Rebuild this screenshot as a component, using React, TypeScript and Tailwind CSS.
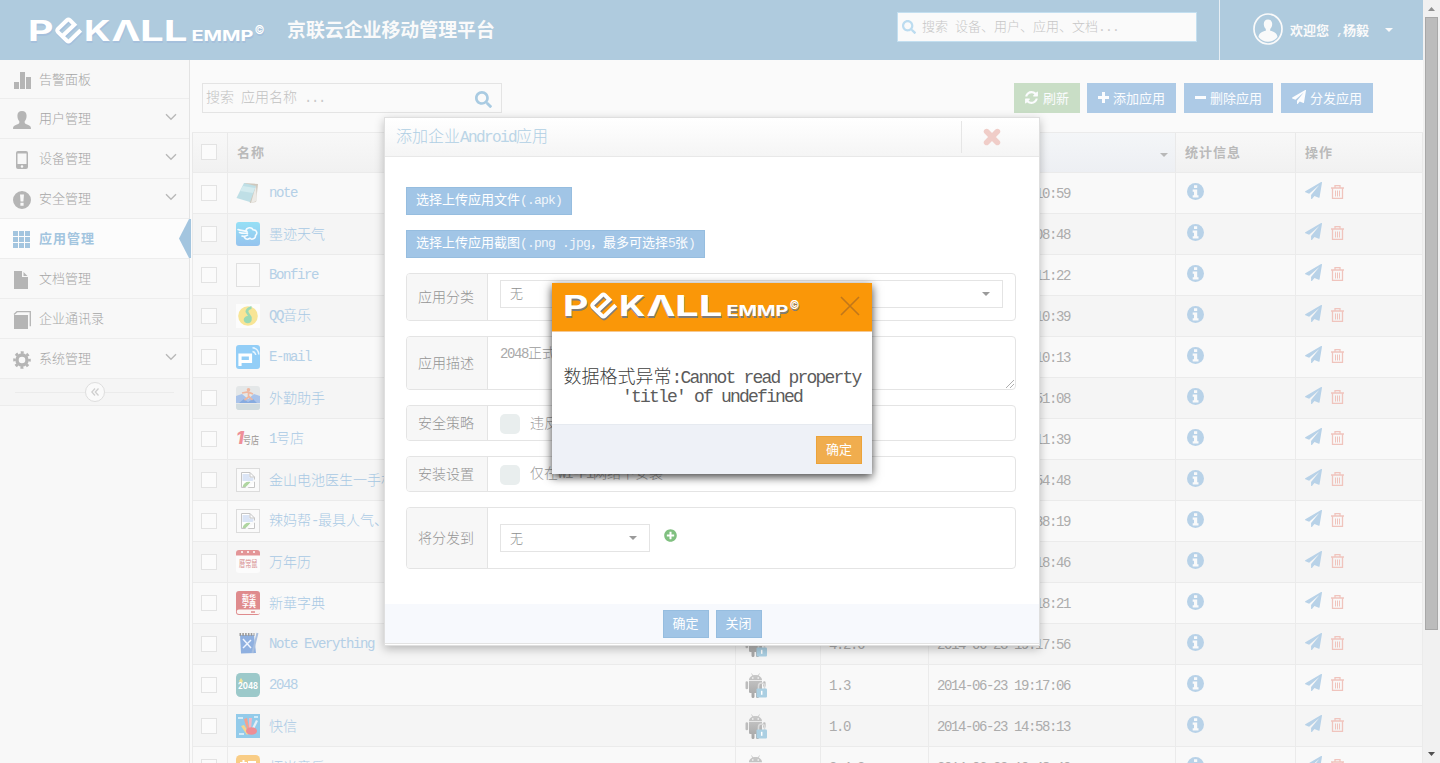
import React from "react";
import { FaSearch, FaPlusCircle } from "react-icons/fa";

/* Splits a string into Han and Latin runs so that Latin letters take half an em. */
function T({ children, size = 13 }: { children: string; size?: number }) {
  const track: Record<number, string> = {
    13: "tracking-[-0.8px]",
    14: "tracking-[-1.4px]",
    16: "tracking-[-1.6px]",
    18: "tracking-[-1.8px]",
  };
  const parts = children.match(/[\x20-\x7e]+|[^\x20-\x7e]+/g) || [];
  return (
    <span className="whitespace-pre">
      {parts.map((p, i) =>
        /^[\x20-\x7e]/.test(p) ? (
          <span key={i} className={`font-['Liberation_Mono',monospace] opacity-85 ${track[size]}`}>
            {p}
          </span>
        ) : (
          <span key={i}>{p}</span>
        )
      )}
    </span>
  );
}

function LogoShapes({ color }: { color: string }) {
  const f = "Inter, 'Liberation Sans', sans-serif";
  return (
    <g fill={color} fontFamily={f} fontWeight={700}>
      <text x="-1" y="25" fontSize="29" textLength="25.5" lengthAdjust="spacingAndGlyphs">P</text>
      <path
        d="M8.300 19.200 L20 8.300 L15.500 3.700 Q14 2.300 12.500 3.700 L3.600 12.400 Q2.200 14 3.600 15.600 L12.500 24.300 Q14 25.700 15.500 24.300 L26.300 13.800"
        transform="translate(25.400 .5)"
        fill="none"
        stroke={color}
        strokeWidth="4"
      />
      <text x="55" y="25" fontSize="29" textLength="26.500" lengthAdjust="spacingAndGlyphs">K</text>
      <text x="82.500" y="25" fontSize="29" textLength="29" lengthAdjust="spacingAndGlyphs">Λ</text>
      <text x="111" y="25" fontSize="29" textLength="47.500" lengthAdjust="spacingAndGlyphs">LL</text>
      <text x="162.500" y="25" fontSize="14.500" textLength="62" lengthAdjust="spacingAndGlyphs">EMMP</text>
      <text x="225.500" y="18" fontSize="12" fontWeight={500} textLength="10" lengthAdjust="spacingAndGlyphs">©</text>
    </g>
  );
}

function Logo({ shadow }: { shadow: string }) {
  return (
    <svg width="237" height="30" viewBox="0 0 237 30" className="shrink-0 overflow-visible">
      <g transform="translate(.6 1.800)" aria-hidden="true">
        <LogoShapes color={shadow} />
      </g>
      <LogoShapes color="#ffffff" />
    </svg>
  );
}

function Plane({ className }: { className: string }) {
  return (
    <svg viewBox="0 0 1792 1792" fill="currentColor" className={className}>
      <path d="M1764 11q33 24 27 64l-256 1536q-5 29-32 45-14 8-31 8-11 0-24-5l-453-185-242 295q-18 23-49 23-13 0-22-4-19-7-30.500-23.500T640 1728v-349l864-1059-1069 925-395-162q-37-14-40-55-2-40 32-59L1696 9q15-9 32-9 20 0 36 11z" />
    </svg>
  );
}

function Info() {
  return (
    <svg width="17" height="17" viewBox="0 0 17 17" fill="#b8d2e8">
      <circle cx="8.500" cy="8.500" r="8.500" />
      <path d="M7 2.300h3.200v2.700H7zM5.700 6.500h4.500v5.700h1.300v2.300H5.700v-2.300H7V8.700H5.700z" fill="#fafafa" />
    </svg>
  );
}

const NAV: { label: string; icon: string; more?: boolean; active?: boolean }[] = [
  { label: "告警面板", icon: "bars" },
  { label: "用户管理", icon: "user", more: true },
  { label: "设备管理", icon: "phone", more: true },
  { label: "安全管理", icon: "alert", more: true },
  { label: "应用管理", icon: "grid", active: true },
  { label: "文档管理", icon: "file" },
  { label: "企业通讯录", icon: "book" },
  { label: "系统管理", icon: "gear", more: true },
];

function NavIcon({ name }: { name: string }) {
  return (
    <svg width="18" height="18" viewBox="0 0 18 18" fill="#b5b5b5">
      {name === "bars" && <path d="M1 11h5v7H1zM7 1h5v17H7zM13 6h5v12h-5z" />}
      {name === "user" && (
        <path d="M9 0c3 0 4.600 2 4.600 4.800 0 2.400-.8 4.200-1.900 5.400v1.600c0 .8 1 1.200 3 2 2.400.9 3.300 1.600 3.300 4.200H0c0-2.600.9-3.300 3.300-4.200 2-.8 3-1.200 3-2v-1.600C5.200 9 4.400 7.200 4.400 4.800 4.400 2 6 0 9 0z" />
      )}
      {name === "phone" && (
        <path fillRule="evenodd" d="M5 0h8q2 0 2 2v14q0 2-2 2H5q-2 0-2-2V2q0-2 2-2zM4.500 2.500v10.500h9V2.500zM9 14.200a1.300 1.300 0 1 0 0 2.600 1.300 1.300 0 0 0 0-2.600z" />
      )}
      {name === "alert" && (
        <path fillRule="evenodd" d="M9 0a9 9 0 1 1 0 18A9 9 0 0 1 9 0zM7 3.600l.6 6.800h2.800l.6-6.800zM7.400 11.800v2.900h3.200v-2.900z" />
      )}
      {name === "grid" && (
        <path fill="#a3c5df" d="M0 0h5v5H0zM6 0h5v5H6zM12 0h5v5h-5zM0 6h5v5H0zM6 6h5v5H6zM12 6h5v5h-5zM0 12h5v5H0zM6 12h5v5H6zM12 12h5v5h-5z" />
      )}
      {name === "file" && <path d="M1 0h8v6h6v12H1zM10.500 1l4 4h-4z" />}
      {name === "book" && (
        <>
          <path d="M1 4h14v14H1z" />
          <path d="M1 3.500 4 .7h13.300v14.600" fill="none" stroke="#b5b5b5" strokeWidth="1.300" />
        </>
      )}
      {name === "gear" && (
        <g fill="none" stroke="#b5b5b5">
          <circle cx="9" cy="9" r="5" strokeWidth="3.400" />
          <circle cx="9" cy="9" r="7.500" strokeWidth="2.600" strokeDasharray="2.945 2.945" strokeDashoffset="1.470" />
        </g>
      )}
    </svg>
  );
}

const ROWS: [string, string, string][] = [
  ["note", "1.0", "2014-06-25 10:10:59"],
  ["墨迹天气", "2.1", "2014-06-25 10:08:48"],
  ["Bonfire", "1.0", "2014-06-24 19:11:22"],
  ["QQ音乐", "3.9", "2014-06-24 18:10:39"],
  ["E-mail", "1.2", "2014-06-24 17:10:13"],
  ["外勤助手", "2.0", "2014-06-24 15:51:08"],
  ["1号店", "3.1", "2014-06-24 14:11:39"],
  ["金山电池医生一手机省电", "4.3", "2014-06-24 11:54:48"],
  ["辣妈帮-最具人气、最温暖", "4.0", "2014-06-24 10:38:19"],
  ["万年历", "3.2", "2014-06-24 09:18:46"],
  ["新華字典", "1.1", "2014-06-23 20:18:21"],
  ["Note Everything", "4.2.6", "2014-06-23 19:17:56"],
  ["2048", "1.3", "2014-06-23 19:17:06"],
  ["快信", "1.0", "2014-06-23 14:58:13"],
  ["虾米音乐", "2.4.3", "2014-06-23 10:48:40"],
];

function AppIcon({ n }: { n: number }) {
  const cjk = "'Noto Sans CJK SC', sans-serif";
  return (
    <svg width="24" height="24" viewBox="0 0 24 24" className="shrink-0">
      {n === 0 && (
        <>
          <path d="M8 2l14 1-2 18-6 1z" fill="#cfc8bd" />
          <path d="M20 4l1 16-6 2z" fill="#eceae6" />
          <path d="M8 2l12 3-6 16L.5 17z" fill="#bfdfe6" />
          <path d="M7 5l12 2-2 5L4 10z" fill="#d3ebef" />
        </>
      )}
      {n === 1 && (
        <>
          <defs>
            <linearGradient id="sky" x1="0" y1="0" x2="0" y2="1">
              <stop offset="0" stopColor="#95e0f6" />
              <stop offset="1" stopColor="#95c3ee" />
            </linearGradient>
          </defs>
          <rect width="24" height="24" rx="3" fill="url(#sky)" />
          <path d="M2 7.500c3 1.200 6 1 9 2M3.500 10.500c3 1.200 5 1 8 .6M6 14c2 .8 3.500.5 5.500-.8M10 8.500c.5-3 5.500-4 7-.8 4 0 4.800 4 2.500 5.800.3 3.500-4 4.500-5.500 2.800-2.500 1.500-4.500.8-5.500-.8" fill="none" stroke="#f4fbff" strokeWidth="1.600" strokeLinecap="round" />
        </>
      )}
      {n === 2 && <rect x=".5" y=".5" width="23" height="23" fill="#fafafa" stroke="#e0e0e0" />}
      {n === 3 && (
        <>
          <rect width="24" height="24" fill="#fcfcfc" />
          <circle cx="12" cy="12" r="9.800" fill="#f8e596" />
          <path d="M9.500 8c0-3 2.500-5 6-6v3c-2.500.8-3.500 1.500-3 3l3.200 5v2.500a4 3.600 0 1 1-3.700-3.400z" fill="#9ad9b5" />
        </>
      )}
      {n === 4 && (
        <>
          <rect width="24" height="24" rx="3" fill="#93cef7" />
          <path d="M4 21V10h10.500v6.500H5" fill="none" stroke="#fff" strokeWidth="3.200" />
          <path d="M16.500 6.500c2 .3 3 1.500 3.300 3.500M16.500 2.800c4 .4 6 2.800 6.300 6.700" fill="none" stroke="#e9f6ff" strokeWidth="1.500" />
        </>
      )}
      {n === 5 && (
        <>
          <rect width="24" height="24" rx="3" fill="#e4e7e8" />
          <path d="M0 10l6-2 6 5 6-5 6 2v7H0z" fill="#a9c3ea" />
          <path d="M3 17l5-4 4 3 5-3 4 4z" fill="#86abe0" />
          <circle cx="12.500" cy="3.800" r="1.800" fill="#efb79f" />
          <path d="M6 7l6-1 5 2M12.500 6v5l-4 3M12.500 10l4 4" fill="none" stroke="#efb79f" strokeWidth="1.700" />
          <path d="M0 18h24v3a3 3 0 0 1-3 3H3a3 3 0 0 1-3-3z" fill="#d0dbdf" />
        </>
      )}
      {n === 6 && (
        <>
          <rect width="24" height="24" fill="#f9f9f9" />
          <text x="0" y="16.500" fontSize="18" fontWeight="800" fontStyle="italic" fill="#ef8f98" fontFamily="Inter">1</text>
          <text x="7" y="17" fontSize="10" fontWeight="500" textLength="16" lengthAdjust="spacingAndGlyphs" fill="#a8a3a0" fontFamily={cjk}>号店</text>
        </>
      )}
      {(n === 7 || n === 8) && (
        <>
          <rect x=".5" y=".5" width="23" height="23" fill="#fafafa" stroke="#dcdcdc" />
          <path d="M5.500 4.500h8.500l4.500 4.500v10.500h-13z" fill="#fff" stroke="#c6c6c6" />
          <path d="M6.500 6h7v3.500h4V13h-11z" fill="#dbe5f6" />
          <path d="M14 4.500V9h4.500" fill="none" stroke="#c6c6c6" />
          <path d="M6.500 19c1-4 4-6 8-5l-4 5z" fill="#b0d6a2" />
          <path d="M10 20l9-8" stroke="#fafafa" strokeWidth="2" />
        </>
      )}
      {n === 9 && (
        <>
          <rect width="24" height="23" rx="3" fill="#fcfcfc" />
          <path d="M0 5.500V3a3 3 0 0 1 3-3h18a3 3 0 0 1 3 3v2.500z" fill="#e39597" />
          <path d="M5 2h2M11 2h2M17 2h2" stroke="#fff" strokeWidth="1.500" />
          <text x="3" y="17" fontSize="9" fontWeight="500" textLength="18.500" lengthAdjust="spacingAndGlyphs" fill="#dea5a5" fontFamily={cjk}>曆常鼠</text>
        </>
      )}
      {n === 10 && (
        <>
          <rect width="24" height="24" rx="3" fill="#df8b8d" />
          <path d="M3 18.500h21V22a2 2 0 0 1-2 1H3a2 2 0 0 1 0-4.500z" fill="#fbf6f4" />
          <path d="M15 21h4" stroke="#df8b8d" strokeWidth="1.500" />
          <text x="6" y="8.500" fontSize="7" fontWeight="700" fill="#fff" fontFamily={cjk}>新华</text>
          <text x="6" y="15.800" fontSize="7" fontWeight="700" fill="#fff" fontFamily={cjk}>字典</text>
        </>
      )}
      {n === 11 && (
        <>
          <path d="M4 3h14l2 18-15 .5z" fill="#8fb0e0" />
          <path d="M3.500 2.500h15" stroke="#9b9b9b" strokeWidth="3" strokeDasharray="1.600 1.200" />
          <path d="M7 7l8 9M15 8l-8 8" stroke="#eef4ff" strokeWidth="1.500" />
          <path d="M21.500 1l-5 20" stroke="#a9bfdf" strokeWidth="2" />
        </>
      )}
      {n === 12 && (
        <>
          <rect width="24" height="24" rx="4.500" fill="#9cc9ca" />
          <path d="M5 5l2 3-2 3-2-3z" fill="#efe39c" />
          <text x="2" y="16" fontSize="9" fontWeight="700" textLength="20" lengthAdjust="spacingAndGlyphs" fill="#fff" fontFamily="Inter">2048</text>
        </>
      )}
      {n === 13 && (
        <>
          <rect width="24" height="24" fill="#93cbea" />
          <path d="M5 12l3-1 5 8-2 2z" fill="#f6d58f" />
          <path d="M8 5l3-1 3 14-2 1z" fill="#f4a28f" />
          <path d="M13 4h3l-1 12-2 1z" fill="#f3b7c4" />
          <path d="M20 6l2 1-5 10-2-1z" fill="#e6eef6" />
          <ellipse cx="15.500" cy="17" rx="5.500" ry="3.800" fill="#ee8e95" />
          <path d="M2 4h5M18 3h4M3 20h5" stroke="#e8f6fd" strokeWidth="1.500" />
        </>
      )}
      {n === 14 && (
        <>
          <rect width="24" height="24" rx="4.500" fill="#f9cd86" />
          <path d="M5 8h5v5H5zM7.500 5v12M12 7h8M16 7v11" fill="none" stroke="#fff" strokeWidth="2" />
        </>
      )}
    </svg>
  );
}

function Android() {
  return (
    <svg width="23" height="25" viewBox="0 0 23 25">
      <defs>
        <linearGradient id="droid" x1="0" y1="0" x2="0" y2="1">
          <stop offset="0" stopColor="#cacaca" />
          <stop offset="1" stopColor="#a4a4a4" />
        </linearGradient>
      </defs>
      <path d="M4 7.200C4 4 7 2 10.500 2S17 4 17 7.200zM4 8h13v10.800q0 1.200-1.200 1.200H14v3.500a1.500 1.500 0 0 1-3 0V20H9.500v3.500a1.500 1.500 0 0 1-3 0V20H5.200Q4 20 4 18.800z" fill="url(#droid)" />
      <path d="M.5 9.500a1.300 1.300 0 0 1 2.600 0v5.500a1.300 1.300 0 0 1-2.600 0zM18 9.500a1.300 1.300 0 0 1 2.600 0v4H18z" fill="#bdbdbd" />
      <path d="M6.500.5l1.500 2.500M14.500.5L13 3" stroke="#c4c4c4" strokeWidth=".8" />
      <circle cx="7.800" cy="5" r=".8" fill="#fff" />
      <circle cx="13.200" cy="5" r=".8" fill="#fff" />
      <path d="M13.500 16v-3a3 3 0 0 1 6 0v3" fill="none" stroke="#dadada" strokeWidth="1.600" />
      <rect x="11.500" y="15.500" width="10.500" height="9" rx="1" fill="#abcfe2" />
      <path d="M16.700 17.800v4" stroke="#fff" strokeWidth="1.500" />
    </svg>
  );
}

function Trash() {
  return (
    <svg width="13" height="15" viewBox="0 0 13 15" fill="none" stroke="#f0c4bd">
      <path d="M0 3h13M4 3V.6h5V3M1.500 3v10.300h10V3" strokeWidth="1.300" />
      <path d="M4.500 5.500v6M6.500 5.500v6M8.500 5.500v6" strokeWidth="1" />
    </svg>
  );
}

function Caret({ color }: { color: string }) {
  return (
    <svg width="8" height="4" viewBox="0 0 8 4" fill={color} className="shrink-0">
      <path d="M0 0h8L4 4z" />
    </svg>
  );
}

function Box() {
  return <span className="block size-4 border border-[#e3e3e3] bg-[#fbfbfb]" />;
}

const GRID = "grid grid-cols-[35px_508px_85px_108px_247px_120px_128px]";

function Table() {
  return (
    <div className="mt-[19px] ml-[2px] w-[1231px] text-[13px] text-[#a9a9a9]">
      <div className={`${GRID} h-10 border-t border-[#ebebeb] bg-gradient-to-b from-[#f8f8f8] to-[#f1f1f1] font-bold tracking-[1px] text-[#bababa] [&>div]:flex [&>div]:items-center [&>div]:border-l [&>div]:border-[#e9e9e9] [&>div]:pb-0.5 [&>div]:pl-[9px]`}>
        <div className="pl-2!"><Box /></div>
        <div>名称</div>
        <div>平台</div>
        <div>版本</div>
        <div className="justify-between bg-gradient-to-b from-[#f4f6f8] to-[#edeff3] pr-[7px]">
          <span>更新时间</span>
          <span className="mt-1.5"><Caret color="#b8b8b8" /></span>
        </div>
        <div>统计信息</div>
        <div className="border-r">操作</div>
      </div>
      {ROWS.map(([name, ver, date], i) => (
        <div
          key={i}
          className={`${GRID} h-[41px] border-t border-[#ebebeb] ${i % 2 ? "bg-[#f5f5f5]" : "bg-[#f9f9f9]"} [&>div]:flex [&>div]:items-center [&>div]:overflow-hidden [&>div]:border-l [&>div]:border-[#ebebeb]`}
        >
          <div className="pl-2"><Box /></div>
          <div className="gap-[9px] pl-2 text-[14px] text-[#a9c9e4]">
            <AppIcon n={i} />
            <span className="-mt-0.5"><T size={14}>{name}</T></span>
          </div>
          <div className="pl-[9px]"><Android /></div>
          <div className="pb-px pl-2 text-[14px] text-[#a0a0a0]"><T size={14}>{ver}</T></div>
          <div className="pb-px pl-2 text-[14px] text-[#a0a0a0]"><T size={14}>{date}</T></div>
          <div className="pb-[3px] pl-[11px]"><Info /></div>
          <div className="items-start! gap-[9px] border-r pl-[9px] pt-[9px]">
            <Plane className="size-[17px] text-[#b8d2e8]" />
            <span className="mt-[3px]"><Trash /></span>
          </div>
        </div>
      ))}
    </div>
  );
}

function Refresh() {
  return (
    <svg width="13" height="15" viewBox="0 0 1536 1792" fill="currentColor">
      <path d="M1511 1056q0 5-1 7-64 268-268 434.500T764 1664q-146 0-282.500-55T238 1452l-129 129q-19 19-45 19t-45-19-19-45v-448q0-26 19-45t45-19h448q26 0 45 19t19 45-19 45l-137 137q71 66 161 102t187 36q134 0 250-65t186-179q11-17 53-117 8-23 30-23h192q13 0 22.500 9.500t9.500 22.500zm25-800v448q0 26-19 45t-45 19h-448q-26 0-45-19t-19-45 19-45l138-138Q969 384 768 384q-134 0-250 65T332 628q-11 17-53 117-8 23-30 23H50q-13 0-22.500-9.500T18 736v-7q65-268 270-434.500T768 128q146 0 284 55.500T1297 340l130-129q19-19 45-19t45 19 19 45z" />
    </svg>
  );
}

function FormRow({ label, h, children }: { label: string; h: string; children: React.ReactNode }) {
  return (
    <div className={`flex w-[610px] rounded-[4px] border border-[#e4e4e4] bg-white ${h}`}>
      <div className="flex w-[81px] shrink-0 items-center rounded-l-[3px] border-r border-[#e4e4e4] bg-[#f7f7f7] pb-0.5 pl-[11px] text-[14px] text-[#959595]">
        {label}
      </div>
      <div className="relative flex min-w-0 flex-1 items-center pl-3 text-[14px] text-[#9b9b9b]">{children}</div>
    </div>
  );
}

const BTN = "flex h-7 items-center justify-center border border-[#96bddf] bg-[#a1c5e6] pb-[3px] text-[13px] font-normal text-white";

function AddDialog() {
  return (
    <div className="absolute left-[384px] top-[117px] flex h-[529px] w-[656px] flex-col border border-[#dfdfdf] bg-white shadow-[0_3px_9px_rgba(0,0,0,0.25)]">
      <div className="flex h-[39px] shrink-0 items-center border-b border-[#e8e8e8] bg-gradient-to-b from-white to-[#f5f5f5] pb-px pl-[11px] text-[16px] text-[#b0cfe4]">
        <T size={16}>添加企业Android应用</T>
        <div className="ml-auto flex h-8 w-[78px] items-center border-l border-[#e6e6e6] pl-[21px]">
          <svg width="18" height="18" viewBox="0 0 18 18" stroke="#f0cdc8" strokeWidth="5.600" strokeLinecap="round">
            <path d="M3.600 3.600l10.800 10.800M14.400 3.600 3.600 14.400" />
          </svg>
        </div>
      </div>
      <div className="flex flex-1 flex-col items-start gap-[15px] pl-[21px] pt-[30px]">
        <button className={`${BTN} w-[166px]`}><T>选择上传应用文件(.apk)</T></button>
        <button className={`${BTN} w-[299px]`}><T>选择上传应用截图(.png .jpg，最多可选择5张)</T></button>
        <FormRow label="应用分类" h="h-12">
          <div className="mb-[7px] flex h-7 w-[503px] items-center justify-between border border-[#e4e4e4] pl-[9px] pr-3 text-[13px] text-[#8f8f8f]">
            <span className="-mt-0.5">无</span> <Caret color="#9a9a9a" />
          </div>
        </FormRow>
        <FormRow label="应用描述" h="h-[54px]">
          <span className="mb-5 text-[14px]"><T size={14}>2048正式版</T></span>
          <svg width="8" height="8" viewBox="0 0 8 8" className="absolute bottom-px right-px" stroke="#999" strokeWidth=".8">
            <path d="M0 8 8 0M4 8l4-4" />
          </svg>
        </FormRow>
        <FormRow label="安全策略" h="h-9">
          <span className="mr-2.5 mt-0.5 size-5 rounded-[5px] bg-[#e9eeee]" />
          <span className="-mt-0.5"><T size={14}>违反安全策略时卸载</T></span>
        </FormRow>
        <FormRow label="安装设置" h="h-9">
          <span className="mr-2.5 mt-0.5 size-5 rounded-[5px] bg-[#e9eeee]" />
          <span className="-mt-0.5"><T size={14}>仅在Wi-Fi网络下安装</T></span>
        </FormRow>
        <FormRow label="将分发到" h="h-[62px]">
          <div className="flex h-7 w-[150px] items-center justify-between border border-[#e4e4e4] pl-[9px] pr-3 text-[13px] text-[#8f8f8f]">
            <span className="-mt-0.5">无</span> <Caret color="#9a9a9a" />
          </div>
          <FaPlusCircle className="mb-1.5 ml-3.5 size-[13px] text-[#80c080]" />
        </FormRow>
      </div>
      <div className="mb-px flex h-10 shrink-0 items-start justify-center gap-[7px] border-b border-[#e3e3e3] bg-[#f7f9fd] pt-1.5">
        <button className={`${BTN} w-[46px]`}>确定</button>
        <button className={`${BTN} w-[46px]`}>关闭</button>
      </div>
    </div>
  );
}

function ErrorDialog() {
  return (
    <div className="absolute left-[552px] top-[283px] flex h-[191px] w-[320px] flex-col bg-white shadow-[0_3px_9px_rgba(0,0,0,0.75)]">
      <div className="flex h-[49px] shrink-0 items-center justify-between border-b border-[#f5c893] bg-[#fa9708] pb-0.5 pl-3 pr-3">
        <Logo shadow="#7f7c78" />
        <svg width="20" height="20" viewBox="0 0 20 20" strokeWidth="1.600">
          <path d="M1 1l18 18M19 1 1 19" stroke="#c1771a" />
        </svg>
      </div>
      <div className="flex flex-1 flex-col items-center pt-[34px] text-[18px] leading-[19px] text-[#404040]">
        <p className="h-[19px]"><T size={18}>数据格式异常:Cannot read property</T></p>
        <p className="h-[19px]"><T size={18}>'title' of undefined</T></p>
      </div>
      <div className="flex h-[50px] shrink-0 justify-end border-t border-[#e6eaf0] bg-[#eef1f7] pr-2.5 pt-[11px]">
        <button className="flex h-7 w-[46px] items-center justify-center border border-[#eca33a] bg-[#f0ad4e] pb-[3px] text-[13px] font-normal text-white">确定</button>
      </div>
    </div>
  );
}

export default function App() {
  return (
    <div className="relative flex h-[763px] w-[1440px] overflow-hidden bg-[#fafafa] font-['Noto_Sans_CJK_SC',sans-serif] font-light leading-none">
      <div className="flex h-[763px] w-[1423px] shrink-0 flex-col overflow-hidden">
        <header className="flex h-[60px] shrink-0 items-center bg-[#afcbde] pl-[29px] text-[#fafafa]">
          <div className="mt-0.5"><Logo shadow="#a5c0dc" /></div>
          <h1 className="mb-0.5 ml-[21px] whitespace-nowrap text-[18.9px] font-bold">京联云企业移动管理平台</h1>
          <div className="mb-[7px] ml-auto flex h-[30px] w-[300px] items-center border border-[#c3dff0] bg-[#fafafa] pl-1 text-[13px] text-[#c6c6c6]">
            <FaSearch className="mr-1.5 size-[14px] text-[#bcdcf0]" />
            <T>搜索 设备、用户、应用、文档...</T>
          </div>
          <div className="ml-[22px] flex h-[60px] w-[204px] items-center border-l border-[#e6eef4] pl-[33px] text-[13px] font-bold">
            <svg width="30" height="32" viewBox="0 0 30 32" className="mb-0.5">
              <ellipse cx="15" cy="16" rx="14" ry="15" fill="none" stroke="#fafafa" strokeWidth="1.700" />
              <path d="M15 6.500c2.800 0 4.200 2 4.200 4.600 0 2.200-.9 4-2 5v1.600c3.500.8 7 2.300 7.300 6.300-2.300 3-5.700 4.700-9.500 4.700S7.800 27 5.500 24c.3-4 3.800-5.500 7.300-6.300v-1.600c-1.100-1-2-2.800-2-5 0-2.600 1.400-4.600 4.200-4.600z" fill="#fafafa" />
            </svg>
            <span className="ml-[7px] mr-4"><T>欢迎您 ,杨毅</T></span>
            <Caret color="#fafafa" />
          </div>
        </header>
        <div className="flex min-h-0 flex-1">
          <aside className="flex w-[190px] shrink-0 flex-col border-r border-[#e3e3e3] bg-[#f8f8f8] text-[13px] text-[#a6a6a6]">
            {NAV.map((n, i) => (
              <div
                key={n.label}
                className={`relative flex shrink-0 items-center border-b border-[#ededed] pl-[13px] ${i === 0 ? "h-[39px]" : "h-10"} ${n.active ? "bg-[#fcfcfc] font-bold tracking-[1px] text-[#a3c5df]" : ""}`}
              >
                <span className="mt-0.5 w-[26px]"><NavIcon name={n.icon} /></span>
                <span className="-mt-0.5">{n.label}</span>
                {n.more && (
                  <svg width="12" height="8" viewBox="0 0 12 8" className="mb-[3px] ml-auto mr-3" fill="none" stroke="#b9b9b9" strokeWidth="1.400">
                    <path d="M1 1.200l5 5 5-5" />
                  </svg>
                )}
                {n.active && (
                  <svg width="12" height="39" viewBox="0 0 12 39" className="absolute -right-0.5 top-0" fill="#a3c5df">
                    <path d="M12 0v39h-2L0 19.500 10 0z" />
                  </svg>
                )}
              </div>
            ))}
            <div className="flex h-[27px] shrink-0 items-center border-b border-[#ececec] bg-[#f5f5f5] px-[15px]">
              <span className="h-px flex-1 bg-[#ebebeb]" />
              <span className="flex size-5 items-center justify-center rounded-full border border-[#dedede] bg-[#fafafa]">
                <svg width="8" height="8" viewBox="0 0 8 8" fill="none" stroke="#cfcfcf" strokeWidth="1.300">
                  <path d="M4 .5.8 4 4 7.500M7.500.5 4.300 4l3.200 3.500" />
                </svg>
              </span>
              <span className="h-px flex-1 bg-[#ebebeb]" />
            </div>
          </aside>
          <main className="min-w-0 flex-1 pt-[23px]">
            <div className="flex h-[30px] items-center pl-3 pr-[50px] text-[13px] font-normal text-[#fbfcfe] [&>div]:pb-0.5">
              <div className="mr-auto flex h-[30px] w-[300px] items-center justify-between border border-[#e4e4e4] px-[3px] text-[14px] font-light text-[#c2c2c2]">
                <T size={14}>搜索 应用名称 ...</T>
                <FaSearch className="mr-[6px] mt-1 size-[17px] text-[#a9cbe2]" />
              </div>
              <div className="mr-[7px] flex h-[30px] w-[66px] items-center gap-[5px] bg-[#c9dec6] pl-[11px]"><Refresh />刷新</div>
              <div className="mr-2 flex h-[30px] w-[89px] items-center gap-1 bg-[#adcae6] pl-[11px]">
                <svg width="11" height="11" viewBox="0 0 11 11" fill="currentColor"><path d="M4 0h3v4h4v3H7v4H4V7H0V4h4z" /></svg>添加应用
              </div>
              <div className="mr-2 flex h-[30px] w-[89px] items-center gap-1 bg-[#adcae6] pl-[11px]">
                <svg width="11" height="11" viewBox="0 0 11 11" fill="currentColor"><path d="M0 4h11v3H0z" /></svg>删除应用
              </div>
              <div className="flex h-[30px] w-[92px] items-center gap-1 bg-[#adcae6] pl-[11px]"><Plane className="size-[14px]" />分发应用</div>
            </div>
            <Table />
          </main>
        </div>
      </div>
      <div className="flex w-[17px] shrink-0 flex-col items-center bg-[#f1f1f1]">
        <svg width="17" height="17" viewBox="0 0 17 17" className="shrink-0" fill="#8f8f8f"><path d="M5 11h7L8.500 7z" /></svg>
        <div className="h-[613px] w-[13px] border border-[#a8a8a8] bg-[#bcbcbc]" />
        <svg width="17" height="17" viewBox="0 0 17 17" className="mt-auto shrink-0" fill="#505050"><path d="M5 6h7l-3.500 4z" /></svg>
      </div>
      <AddDialog />
      <ErrorDialog />
    </div>
  );
}
